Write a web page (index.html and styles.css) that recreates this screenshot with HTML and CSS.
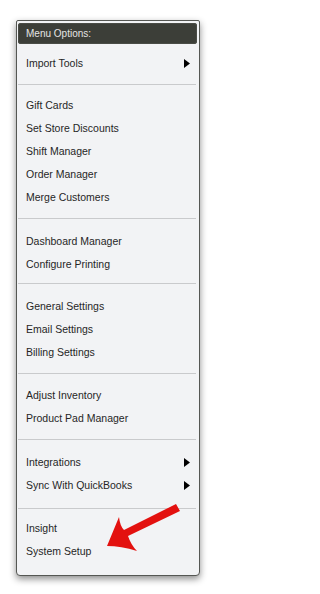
FILE: index.html
```html
<!DOCTYPE html>
<html>
<head>
<meta charset="utf-8">
<link rel="stylesheet" href="styles.css">
</head>
<body>
<div class="stage">
  <div class="panel">
    <div class="header">Menu Options:</div>
    <div class="group g1">
      <div class="item sub">Import Tools<svg class="caret" viewBox="0 0 6 9" width="6" height="9"><polygon points="0,0 6,4.5 0,9" fill="#000"/></svg></div>
    </div>
    <div class="group g2">
      <div class="item">Gift Cards</div>
      <div class="item">Set Store Discounts</div>
      <div class="item">Shift Manager</div>
      <div class="item">Order Manager</div>
      <div class="item">Merge Customers</div>
    </div>
    <div class="group g3">
      <div class="item">Dashboard Manager</div>
      <div class="item">Configure Printing</div>
    </div>
    <div class="group g4">
      <div class="item">General Settings</div>
      <div class="item">Email Settings</div>
      <div class="item">Billing Settings</div>
    </div>
    <div class="group g5">
      <div class="item">Adjust Inventory</div>
      <div class="item">Product Pad Manager</div>
    </div>
    <div class="group g6">
      <div class="item sub">Integrations<svg class="caret" viewBox="0 0 6 9" width="6" height="9"><polygon points="0,0 6,4.5 0,9" fill="#000"/></svg></div>
      <div class="item sub">Sync With QuickBooks<svg class="caret" viewBox="0 0 6 9" width="6" height="9"><polygon points="0,0 6,4.5 0,9" fill="#000"/></svg></div>
    </div>
    <div class="group g7 last">
      <div class="item">Insight</div>
      <div class="item">System Setup</div>
    </div>
  </div>
  <svg class="pointer" viewBox="0 0 219 594" width="219" height="594">
    <path d="M107,546 L119,517 Q120,526 124,530 L176,504 L180,511 L128,536 Q131,545 137,551 Q121,546 107,546 Z" fill="#e3110f"/>
  </svg>
</div>
</body>
</html>
```

FILE: styles.css
```css
html, body {
  margin: 0;
  padding: 0;
  background: #ffffff;
}

.stage {
  position: relative;
  width: 219px;
  height: 594px;
  padding: 20px 0 0 16px;
  box-sizing: border-box;
}

.panel {
  width: 184px;
  box-sizing: border-box;
  border: 1px solid #555753;
  border-radius: 2px 2px 4px 4px;
  background: #f2f3f5;
  padding: 2px 2px 0 1px;
  box-shadow: 0 3px 7px rgba(0, 0, 0, 0.45);
  font-family: "Liberation Sans", Arial, sans-serif;
  font-size: 10.5px;
  color: #262626;
}

.header {
  height: 21px;
  line-height: 21px;
  background: #3c3e38;
  border-radius: 3px;
  color: #e4e4e4;
  font-size: 10px;
  padding-left: 8px;
  box-shadow: inset 0 0 0 1px #4a4c46;
}

.group {
  padding: 10px 0 9px 0;
  border-bottom: 1px solid #c9cacc;
  margin-right: 1px;
}

.group.last {
  border-bottom: none;
}

.g1 { padding-top: 8px; }
.g2 { padding-top: 9px; }
.g3 { padding-top: 11px; padding-bottom: 7px; }
.g4 { padding-top: 11px; }
.g6 { padding-top: 11px; padding-bottom: 11px; }
.g7 { padding-top: 8px; padding-bottom: 12px; }

.item {
  height: 23px;
  line-height: 23px;
  padding: 0 6px 0 8px;
  display: flex;
  align-items: center;
  justify-content: space-between;
  white-space: nowrap;
}

.caret {
  display: block;
  flex: none;
}

.pointer {
  position: absolute;
  left: 0;
  top: 0;
  pointer-events: none;
}
```
